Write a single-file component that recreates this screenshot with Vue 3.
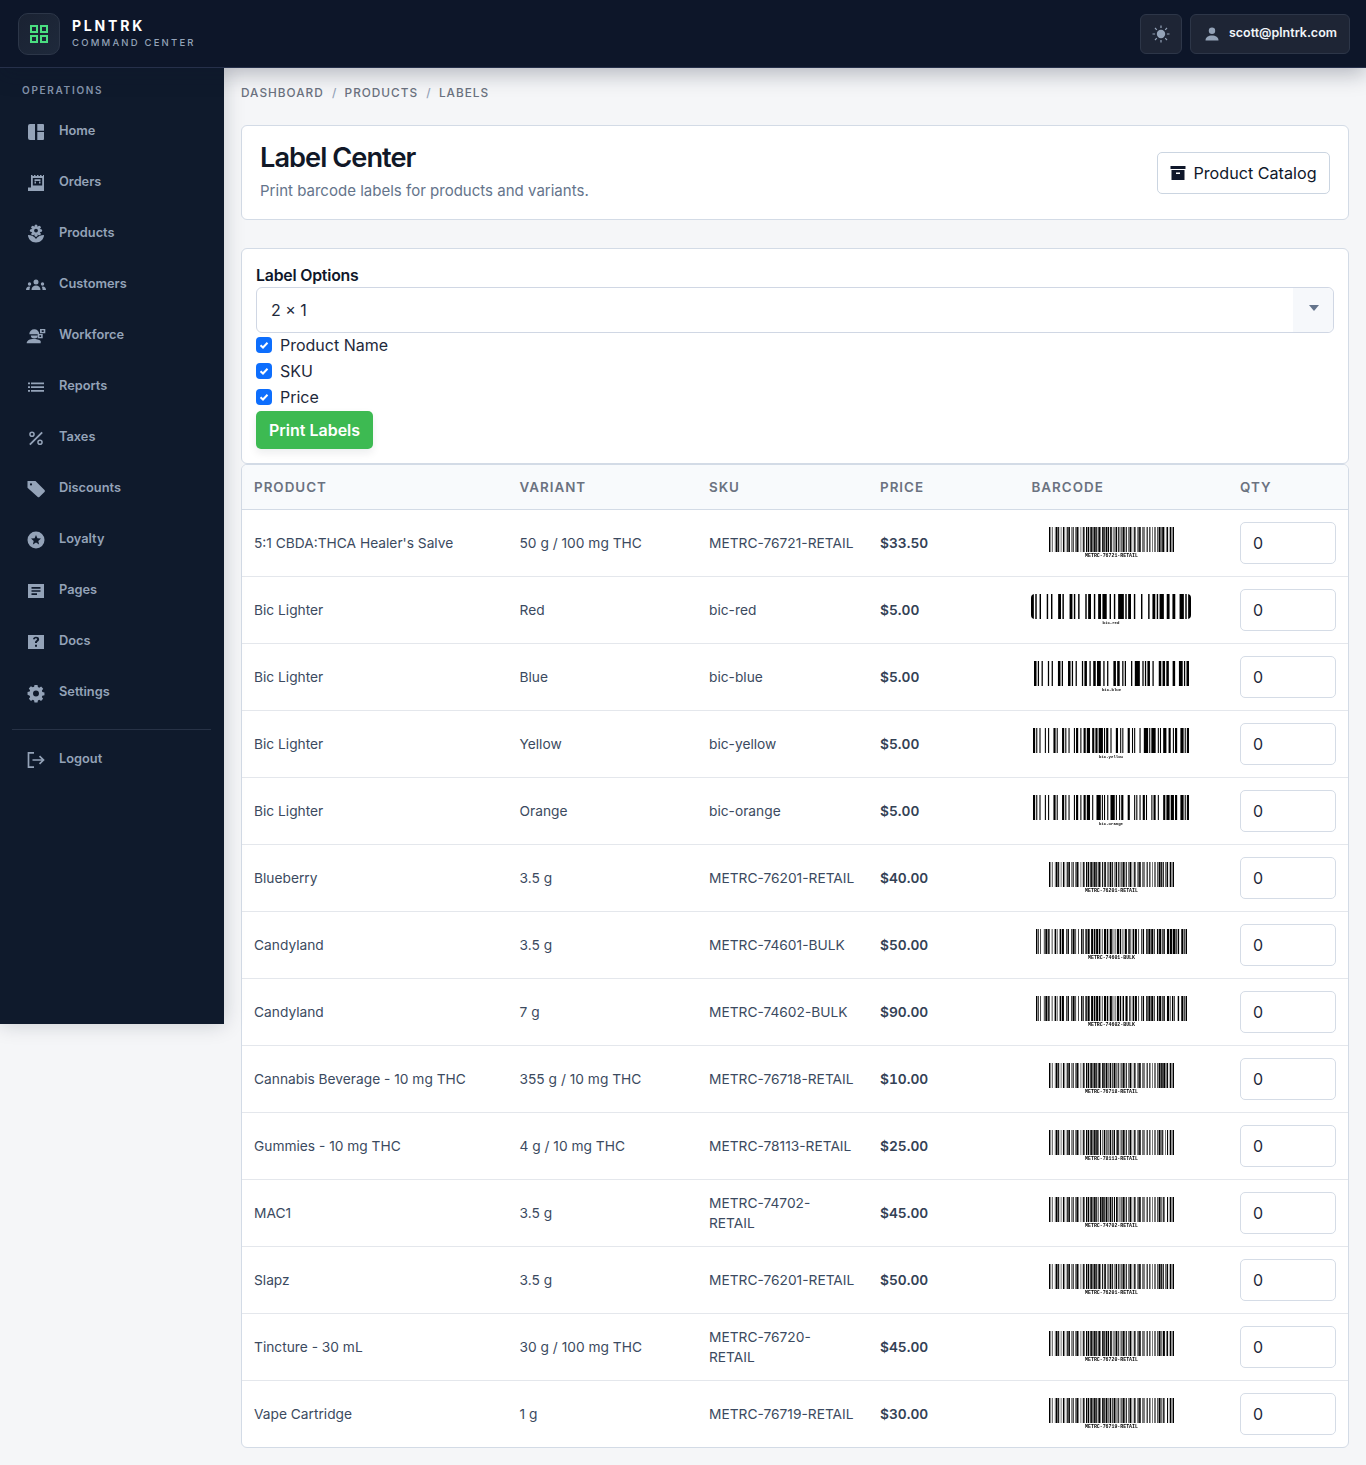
<template>
  <div class="app">
    <header class="topbar">
      <div class="brand">
        <div class="brand-mark">
          <svg width="18" height="18" viewBox="0 0 18 18" fill="none" stroke="#4ade80" stroke-width="2">
            <rect x="1" y="1" width="6" height="6" /><rect x="11" y="1" width="6" height="6" />
            <rect x="1" y="11" width="6" height="6" /><rect x="11" y="11" width="6" height="6" />
          </svg>
        </div>
        <div>
          <div class="brand-name">PLNTRK</div>
          <div class="brand-sub">COMMAND CENTER</div>
        </div>
      </div>
      <div class="top-actions">
        <button class="top-btn theme">
          <svg width="18" height="18" viewBox="0 0 18 18" fill="#94a3b8">
            <circle cx="9" cy="9" r="4.2" />
            <path d="M9 .5v2.6M9 14.9v2.6M.5 9h2.6M14.9 9h2.6M3 3l1.8 1.8M13.2 13.2 15 15M15 3l-1.8 1.8M4.8 13.2 3 15" stroke="#94a3b8" stroke-width="1.2" />
          </svg>
        </button>
        <button class="top-btn user">
          <svg width="14" height="14" viewBox="0 0 14 14" fill="#94a3b8">
            <circle cx="7" cy="3.8" r="3.2" /><path d="M.5 13.5c0-3.3 2.9-5 6.5-5s6.500 1.700 6.500 5z" />
          </svg>
          <span>scott@plntrk.com</span>
        </button>
      </div>
    </header>

    <div class="layout">
      <aside class="sidebar">
        <div class="side-title">OPERATIONS</div>
        <a v-for="item in navItems" :key="item.label" class="nav-item">
          <svg class="nav-icon" width="20" height="20" viewBox="0 0 20 20" fill="#94a3b8" v-html="item.icon"></svg>
          <span>{{ item.label }}</span>
        </a>
        <div class="side-rule"></div>
        <a class="nav-item">
          <svg class="nav-icon" width="20" height="20" viewBox="0 0 20 20" fill="none" stroke="#94a3b8" stroke-width="1.7">
            <path d="M8 2.800H2.500v14.400H8M6.500 10h11M13.500 6.200 17.500 10l-4 3.800" />
          </svg>
          <span>Logout</span>
        </a>
      </aside>

      <main class="content">
        <div class="crumbs">
          <span>DASHBOARD</span><i>/</i><span>PRODUCTS</span><i>/</i><span>LABELS</span>
        </div>

        <section class="card page-head">
          <div class="head-text">
            <h1>Label Center</h1>
            <p>Print barcode labels for products and variants.</p>
          </div>
          <button class="catalog-btn">
            <svg width="16" height="16" viewBox="0 0 16 16" fill="#0f172a">
              <path d="M.5 1h15v3H.5zM1.500 5h13v10h-13z" />
              <rect x="6" y="7.500" width="4" height="1.500" fill="#fff" />
            </svg>
            Product Catalog
          </button>
        </section>

        <section class="card options">
          <label class="opt-title">Label Options</label>
          <div class="select">
            <span>2 × 1</span>
            <div class="select-arrow"><b></b></div>
          </div>
          <label v-for="c in checks" :key="c" class="check">
            <span class="box">
              <svg width="10" height="10" viewBox="0 0 10 10" fill="none" stroke="#fff" stroke-width="2"><path d="M1.500 5.200 4 7.500 8.500 2.800" /></svg>
            </span>
            {{ c }}
          </label>
          <button class="print-btn">Print Labels</button>
        </section>

        <section class="card table-card">
          <table>
            <thead>
              <tr>
                <th class="c-product">PRODUCT</th>
                <th class="c-variant">VARIANT</th>
                <th class="c-sku">SKU</th>
                <th class="c-price">PRICE</th>
                <th class="c-barcode">BARCODE</th>
                <th class="c-qty">QTY</th>
              </tr>
            </thead>
            <tbody>
              <tr v-for="row in barcodeRows" :key="row.key">
                <td>{{ row.product }}</td>
                <td>{{ row.variant }}</td>
                <td>{{ row.sku }}</td>
                <td class="price">{{ row.price }}</td>
                <td class="barcode-cell">
                  <div class="barcode" :style="{ width: row.width + 'px' }">
                    <svg :class="{ rounded: row.width === 160 }" :width="row.width" height="25" :viewBox="`0 0 ${row.modules} 25`" preserveAspectRatio="none">
                      <rect v-for="(b, i) in row.bars" :key="i" :x="b.x" y="0" :width="b.w" height="25" fill="#000" />
                    </svg>
                    <div class="barcode-text" :style="{ fontSize: row.textSize + 'px' }">{{ row.sku }}</div>
                  </div>
                </td>
                <td><input class="qty" value="0" /></td>
              </tr>
            </tbody>
          </table>
        </section>
      </main>
    </div>
  </div>
</template>

<script setup>
import { computed } from 'vue'

const checks = ['Product Name', 'SKU', 'Price']

const flower = [0, 45, 90, 135, 180, 225, 270, 315]
  .map((a) => {
    const r = (a * Math.PI) / 180
    return `<circle cx="${(10 + 4.6 * Math.cos(r)).toFixed(2)}" cy="${(6.6 + 4.6 * Math.sin(r)).toFixed(2)}" r="1.5"/>`
  })
  .join('')

const navItems = [
  { label: 'Home', icon: '<path d="M4 2h5v16H4a2 2 0 0 1-2-2V4a2 2 0 0 1 2-2zM11.300 2H17a1 1 0 0 1 1 1v5.700h-6.700zM11.300 9.900H18V17a1 1 0 0 1-1 1h-5.700z"/>' },
  { label: 'Orders', icon: '<path fill-rule="evenodd" d="M5 2h1.500v1H8V2h1.500v1H11V2h1.500v1H14V2h1.500v1H17V2h1v16H2v-3.500h3zM6.800 5v7.500h9.400V5z"/><path d="M8.500 6.200h6v1.700h-6zM8.500 8.600h1.500v1.800H8.500zM13 8.600h1.500v1.800H13z"/>' },
  { label: 'Products', icon: flower + '<circle cx="10" cy="6.600" r="4.400"/><circle cx="10" cy="6.600" r="1.900" fill="#0f1a2c"/><path d="M2 11c3 0 6.500 1.500 8 4 1.500-2.500 5-4 8-4 0 4-3.500 7.500-8 7.500S2 15 2 11z"/>' },
  { label: 'Customers', icon: '<circle cx="10" cy="7" r="2.500"/><circle cx="3.500" cy="9" r="1.700"/><circle cx="16.500" cy="9" r="1.700"/><path d="M5.500 15c0-3 2-4.500 4.500-4.500s4.500 1.500 4.500 4.500zM0 15c0-2 1.300-3.500 3-3.500l1.200.3c-.5 1-.7 2-.7 3.200zM20 15c0-2-1.300-3.500-3-3.500l-1.200.3c.5 1 .7 2 .7 3.200z"/>' },
  { label: 'Workforce', icon: '<path d="M3.300 8.200a5 5 0 0 1 10 0zM4.800 9.500h7a3.500 3 0 0 1-7 0zM.7 17.300c0-2.800 3-4.300 7-4.300 2.500 0 5.500.5 7 2v2.300z"/><path fill-rule="evenodd" d="M14 3h5.300v4.300H14zM15.700 4.300v1.700h2V4.300zM11.700 8h5v4.300h-5zM13.400 9.300v1.700h1.700V9.300z"/>' },
  { label: 'Reports', icon: '<path d="M2 5.600h2v1.700H2zM5 5.600h13v1.700H5zM2 9.300h2V11H2zM5 9.300h13V11H5zM2 13h2v1.700H2zM5 13h13v1.700H5z"/>' },
  { label: 'Taxes', icon: '<path d="M15.500 3.700 16.800 5 4.500 17.300 3.200 16z"/><path fill-rule="evenodd" d="M6 3.500a2.800 2.800 0 1 1 0 5.600 2.800 2.800 0 0 1 0-5.600zM6 5a1.300 1.300 0 1 0 0 2.600A1.300 1.300 0 0 0 6 5zM14 11.500a2.800 2.800 0 1 1 0 5.600 2.800 2.800 0 0 1 0-5.600zM14 13a1.300 1.300 0 1 0 0 2.600 1.300 1.300 0 0 0 0-2.600z"/>' },
  { label: 'Discounts', icon: '<path fill-rule="evenodd" d="M1.500 2h8l9 9a1.500 1.500 0 0 1 0 2.100l-4.900 4.700a1.500 1.500 0 0 1-2.100 0l-10-9zM5 4.300a1.100 1.100 0 1 0 0 2.200 1.100 1.100 0 0 0 0-2.200z"/>' },
  { label: 'Loyalty', icon: '<path fill-rule="evenodd" d="M10 1.500a8.500 8.500 0 1 1 0 17 8.500 8.500 0 0 1 0-17zM10 5l-1.400 3.300-3.600.3 2.700 2.300-.8 3.500 3.100-1.800 3.100 1.800-.8-3.500 2.700-2.300-3.600-.3z"/>' },
  { label: 'Pages', icon: '<path fill-rule="evenodd" d="M2 3h16v14H2zM5.500 6v1.700h9V6zM5.500 9.200v1.600h9V9.200zM5.500 12.300V14H11v-1.700z"/>' },
  { label: 'Docs', icon: '<path fill-rule="evenodd" d="M2 3h16v14H2zM10 4.800c-1.700 0-2.900.9-3 2.500h2c0-.6.400-1 1-1s1 .3 1 .9c0 .5-.3.800-.9 1.200-.9.600-1.100 1.200-1.100 2.300v.4h2v-.3c0-.7.200-1 .9-1.400.8-.6 1.200-1.200 1.200-2.200 0-1.700-1.300-2.400-3.100-2.400zM9 12.700v2h2v-2z"/>' },
  { label: 'Settings', icon: '<path fill-rule="evenodd" transform="translate(1 1) scale(.9)" d="M8.300 1h3.400l.4 2.400 1.500.7 2.100-1.300 2.300 2.500-1.400 2 .4 1.500 2.400.6v3l-2.400.6-.5 1.500 1.400 2-2.300 2.400-2-1.300-1.500.6-.4 2.300H8.300l-.4-2.300-1.500-.6-2 1.300-2.300-2.400 1.400-2-.5-1.500L.6 12V9l2.400-.6.400-1.500-1.400-2 2.300-2.500 2.100 1.300 1.500-.7zM10 7.200a3.300 3.300 0 1 0 0 6.600 3.300 3.300 0 0 0 0-6.600z"/>' },
]

const rows = [
  { product: '5:1 CBDA:THCA Healer\'s Salve', variant: '50 g / 100 mg THC', sku: 'METRC-76721-RETAIL', price: '$33.50', width: 125 },
  { product: 'Bic Lighter', variant: 'Red', sku: 'bic-red', price: '$5.00', width: 160 },
  { product: 'Bic Lighter', variant: 'Blue', sku: 'bic-blue', price: '$5.00', width: 155 },
  { product: 'Bic Lighter', variant: 'Yellow', sku: 'bic-yellow', price: '$5.00', width: 156 },
  { product: 'Bic Lighter', variant: 'Orange', sku: 'bic-orange', price: '$5.00', width: 156 },
  { product: 'Blueberry', variant: '3.5 g', sku: 'METRC-76201-RETAIL', price: '$40.00', width: 125 },
  { product: 'Candyland', variant: '3.5 g', sku: 'METRC-74601-BULK', price: '$50.00', width: 151 },
  { product: 'Candyland', variant: '7 g', sku: 'METRC-74602-BULK', price: '$90.00', width: 151 },
  { product: 'Cannabis Beverage - 10 mg THC', variant: '355 g / 10 mg THC', sku: 'METRC-76718-RETAIL', price: '$10.00', width: 125 },
  { product: 'Gummies - 10 mg THC', variant: '4 g / 10 mg THC', sku: 'METRC-78113-RETAIL', price: '$25.00', width: 125 },
  { product: 'MAC1', variant: '3.5 g', sku: 'METRC-74702-RETAIL', price: '$45.00', width: 125 },
  { product: 'Slapz', variant: '3.5 g', sku: 'METRC-76201-RETAIL', price: '$50.00', width: 125 },
  { product: 'Tincture - 30 mL', variant: '30 g / 100 mg THC', sku: 'METRC-76720-RETAIL', price: '$45.00', width: 125 },
  { product: 'Vape Cartridge', variant: '1 g', sku: 'METRC-76719-RETAIL', price: '$30.00', width: 125 },
]

// code128 widths, one string per symbol value
const CODE128 = ('212222 222122 222221 121223 121322 131222 122213 122312 132212 221213 221312 231212 112232 122132 122231 113222 123122 123221 223211 221132 221231 213212 223112 312131 311222 321122 321221 312212 322112 322211 212123 212321 232121 111323 131123 131321 112313 132113 132311 211313 231113 231311 112133 112331 132131 113123 113321 133121 313121 211331 231131 213113 213311 213131 311123 311321 331121 312113 312311 332111 314111 221411 431111 111224 111422 121124 121421 141122 141221 112214 112412 122114 122411 142112 142211 241211 221114 413111 241112 134111 111242 121142 121241 114212 124112 124211 411212 421112 421211 212141 214121 412121 111143 111341 131141 114113 114311 411113 411311 113141 114131 311141 411131 211412 211214 211232').split(' ')
const STOP = '2331112'

function encode(text) {
  const codes = [104]
  for (const ch of text) codes.push(ch.charCodeAt(0) - 32)
  let sum = 104
  for (let i = 1; i < codes.length; i++) sum += codes[i] * i
  codes.push(sum % 103)

  const bars = []
  let x = 0
  const pattern = codes.map((c) => CODE128[c]).join('') + STOP
  for (let i = 0; i < pattern.length; i++) {
    const w = Number(pattern[i])
    if (i % 2 === 0) bars.push({ x, w })
    x += w
  }
  return { bars, modules: x }
}

const barcodeRows = computed(() =>
  rows.map((r, i) => ({
    ...r,
    key: i,
    textSize: r.sku.startsWith('METRC') ? 4.9 : 4,
    ...encode(r.sku),
  }))
)
</script>

<style>
html, body {
  margin: 0;
  background: #f5f6f8;
}
</style>

<style scoped>
.app {
  font-family: Inter, 'Liberation Sans', sans-serif;
  color: #0f172a;
  min-height: 1465px;
  background: #f5f6f8;
}

.topbar {
  height: 68px;
  box-sizing: border-box;
  background: #0d1629;
  border-bottom: 1px solid #26304a;
  display: flex;
  align-items: center;
  justify-content: space-between;
  padding: 0 16px 0 18px;
  box-shadow: 0 6px 20px rgba(15, 23, 42, 0.28);
  position: relative;
  z-index: 3;
}

.brand {
  display: flex;
  align-items: center;
  gap: 12px;
}

.brand-mark {
  width: 42px;
  height: 42px;
  box-sizing: border-box;
  border-radius: 10px;
  background: linear-gradient(135deg, #1a2232, #1e293b);
  border: 1px solid #2c3648;
  display: flex;
  align-items: center;
  justify-content: center;
}

.brand-name {
  color: #fff;
  font-size: 14px;
  font-weight: 700;
  letter-spacing: 2.8px;
  line-height: 17px;
  margin-top: -1px;
}

.brand-sub {
  color: #94a3b8;
  font-size: 9.5px;
  font-weight: 500;
  letter-spacing: 2.2px;
  line-height: 13px;
  margin-top: 2px;
}

.top-actions {
  display: flex;
  gap: 8px;
}

.top-btn {
  height: 40px;
  box-sizing: border-box;
  background: #1e2535;
  border: 1px solid #2d3648;
  border-radius: 6px;
  display: flex;
  align-items: center;
  justify-content: center;
  font-family: inherit;
  padding: 0;
}

.theme {
  width: 42px;
}

.user {
  width: 160px;
  gap: 10px;
  justify-content: flex-start;
  padding-left: 14px;
  color: #f1f5f9;
  font-size: 12.48px;
  font-weight: 600;
}

.user span {
  margin-top: -2px;
}

.layout {
  display: flex;
  align-items: flex-start;
}

.sidebar {
  width: 224px;
  height: 956px;
  flex-shrink: 0;
  box-sizing: border-box;
  background: #0f1a2c;
  padding: 15px 12px 0;
  box-shadow: 0 0 20px rgba(15, 23, 42, 0.2);
  position: relative;
  z-index: 2;
}

.side-title {
  color: #8494ab;
  font-size: 10px;
  font-weight: 600;
  letter-spacing: 1.7px;
  line-height: 14px;
  margin: 0 0 8px 10px;
}

.nav-item {
  display: flex;
  align-items: center;
  height: 51px;
  padding-left: 14px;
  gap: 13px;
  color: #94a3b8;
  font-size: 12.8px;
  font-weight: 600;
}

.nav-item span {
  margin-top: -1px;
}

.nav-icon {
  flex-shrink: 0;
  margin-top: 2px;
}

.side-rule {
  height: 1px;
  background: #273246;
  margin: 12px 1px 3px 0;
}

.content {
  flex: 1;
  min-width: 0;
  padding: 17px 17px 17px 17px;
}

.crumbs {
  display: flex;
  align-items: center;
  gap: 8.25px;
  height: 16px;
  color: #6b7280;
  font-size: 11.8px;
  font-weight: 500;
  letter-spacing: 1px;
}

.crumbs i {
  font-style: normal;
  color: #94a3b8;
  letter-spacing: 0;
}

.card {
  background: #fff;
  border: 1px solid #d3dbe6;
  border-radius: 6px;
  box-sizing: border-box;
}

.page-head {
  margin-top: 24px;
  height: 95px;
  display: flex;
  align-items: center;
  justify-content: space-between;
  padding: 0 18px;
}

.head-text {
  padding-bottom: 2px;
}

h1 {
  margin: 0;
  font-size: 27.2px;
  line-height: 32px;
  font-weight: 600;
  letter-spacing: -0.96px;
  color: #111827;
}

.page-head p {
  margin: 7px 0 0;
  font-size: 15.04px;
  line-height: 20px;
  color: #64748b;
}

.catalog-btn {
  height: 42px;
  width: 173px;
  box-sizing: border-box;
  background: #fff;
  border: 1px solid #cbd5e1;
  border-radius: 5px;
  display: flex;
  align-items: center;
  justify-content: center;
  gap: 7px;
  font-family: inherit;
  font-size: 16.16px;
  color: #0f172a;
  padding: 0;
}

.options {
  margin-top: 28px;
  height: 216px;
  padding: 16px 14px 0;
}

.opt-title {
  display: block;
  font-size: 15.84px;
  font-weight: 600;
  line-height: 21px;
  letter-spacing: -0.2px;
  margin-bottom: 1px;
}

.select {
  height: 46px;
  box-sizing: border-box;
  border: 1px solid #d0d7e4;
  border-radius: 6px;
  display: flex;
  align-items: center;
  justify-content: space-between;
  padding-left: 14px;
  margin-bottom: -1px;
  font-size: 16px;
  color: #1e293b;
}

.select-arrow {
  width: 40px;
  height: 44px;
  background: #f6f8fb;
  border-radius: 0 6px 6px 0;
  display: flex;
  align-items: center;
  justify-content: center;
}

.select-arrow b {
  border-left: 5.5px solid transparent;
  border-right: 5.5px solid transparent;
  border-top: 6px solid #64748b;
  margin: -4px 0 0 2px;
}

.check {
  display: flex;
  align-items: center;
  gap: 8px;
  height: 26px;
  font-size: 16px;
  color: #1e293b;
}

.box {
  width: 16px;
  height: 16px;
  border-radius: 4px;
  background: #0d6efd;
  display: flex;
  align-items: center;
  justify-content: center;
}

.print-btn {
  display: block;
  width: 117px;
  height: 38px;
  margin-top: 1px;
  background: #3dba52;
  color: #fff;
  border: 0;
  border-radius: 5px;
  font-family: inherit;
  font-size: 16px;
  font-weight: 600;
  padding: 0;
  box-shadow: 0 4px 8px rgba(15, 23, 42, 0.08);
}

.table-card {
  overflow: hidden;
}

table {
  width: 100%;
  border-collapse: collapse;
  table-layout: fixed;
  font-size: 13.76px;
  color: #3b4a60;
}

th {
  height: 44px;
  padding: 0 12px;
  text-align: left;
  background: #f8fafc;
  color: #6b7280;
  font-size: 13.4px;
  font-weight: 600;
  letter-spacing: 1px;
  border-bottom: 1px solid #d3dbe6;
}

.c-product { width: 241.5px; }
.c-variant { width: 165.5px; }
.c-sku { width: 147px; }
.c-price { width: 127.5px; }
.c-barcode { width: 184.5px; }

td {
  height: 66px;
  padding: 0 12px;
  border-bottom: 1px solid #e4e7ec;
  line-height: 20px;
}

tbody tr:last-child td {
  border-bottom: 0;
}

.price {
  font-weight: 600;
  color: #334155;
  font-variant-numeric: tabular-nums;
}

.barcode-cell {
  padding: 0 25px 0 0;
}

.barcode {
  margin: 0 auto;
}

.barcode svg {
  display: block;
}

.barcode svg.rounded {
  border-radius: 4px;
}

.barcode-text {
  line-height: 6px;
  margin-top: 1px;
  font-weight: 700;
  text-align: center;
  color: #000;
  font-family: 'Liberation Mono', monospace;
  white-space: nowrap;
  will-change: transform;
}

.qty {
  width: 96px;
  height: 42px;
  box-sizing: border-box;
  border: 1px solid #d5dce6;
  border-radius: 5px;
  padding: 0 12px;
  font-family: inherit;
  font-size: 16px;
  color: #1e293b;
  background: #fff;
  outline: none;
  display: block;
}
</style>
